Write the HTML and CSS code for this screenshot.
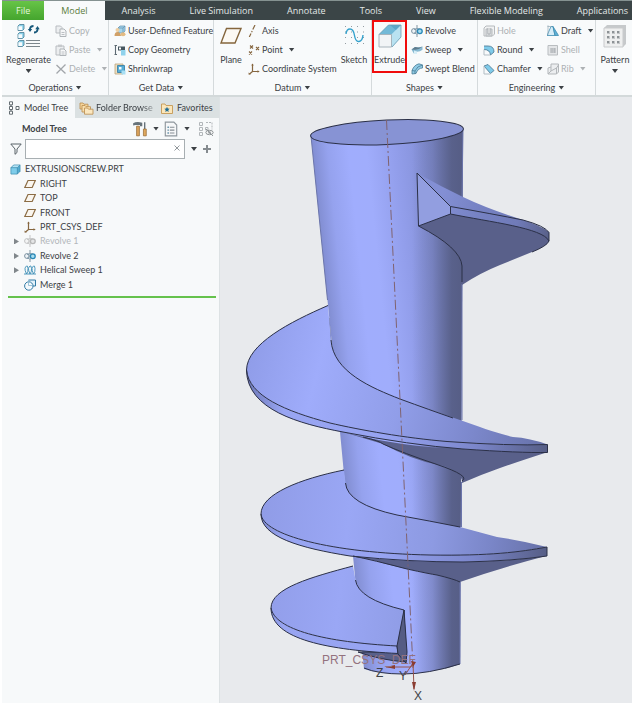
FILE: index.html
```html
<!DOCTYPE html>
<html lang="en">
<head>
<meta charset="utf-8">
<title>EXTRUSIONSCREW.PRT</title>
<link rel="stylesheet" href="styles.css">
</head>
<body>
<svg class="symbols" aria-hidden="true">
  <symbol id="cube" viewBox="0 0 12 12"><path d="M1 4l3-3h7v7l-3 3H1z" fill="#55acd0"/><path d="M1 4l3-3h7L8 4z" fill="#b5e3f4"/><path d="M1 4h7v7H1z" fill="#7fcdea"/><path d="M1 4l3-3h7v7l-3 3H1zM1 4h7v7M8 4l3-3" fill="none" stroke="#3687aa" stroke-width=".7"/></symbol>
  <symbol id="plane" viewBox="0 0 12 12"><path d="M4 2.500h7.300L8.200 9.500H.8z" fill="#faf6ef" stroke="#8c6d45" stroke-width="1.200"/></symbol>
  <symbol id="csys" viewBox="0 0 12 12"><path d="M4.500 1v7.500H11M4.500 8.500L1.500 11" fill="none" stroke="#86663f" stroke-width="1.200"/><path d="M3.300 2.500l1.200-2 1.200 2zM9.500 7.300l2.200 1.200-2.200 1.200zM.5 9.500l.2 2.200 2.200-.4z" fill="#86663f"/></symbol>
  <symbol id="revolve" viewBox="0 0 12 12"><path d="M6 0v3M6 4v4M6 9v3" stroke="#8296a3" fill="none"/><ellipse cx="2.800" cy="6" rx="2.200" ry="2.400" fill="#eef3f7" stroke="#7c919f"/><circle cx="8.800" cy="6.200" r="2.400" fill="#a9ddf0" stroke="#2688b8" stroke-width="1.300"/><path d="M3 4.500q3-2 6-.4M3 8q3 1.500 5 .5" fill="none" stroke="#68899d" stroke-width=".8"/></symbol>
  <symbol id="copy" viewBox="0 0 12 12"><path d="M1 1h4.500L7 2.500V8H1z" fill="#eceef0" stroke="#b8bcc0"/><path d="M5 4h4l2 2v5.500H5z" fill="#f5f6f7" stroke="#afb4b8"/><path d="M6.500 7.500h3M6.500 9.500h3" stroke="#bcc0c4"/></symbol>
  <symbol id="paste" viewBox="0 0 12 12"><path d="M1 2h8v9H1z" fill="#eceef0" stroke="#b8bcc0"/><path d="M3 .6h4v2.400H3z" fill="#c6c9cc"/><path d="M5 5h4l2 2v4.500H5z" fill="#f7f8f9" stroke="#afb4b8"/><path d="M6.500 8h3M6.500 10h3" stroke="#bcc0c4"/></symbol>
  <symbol id="delete" viewBox="0 0 12 12"><path d="M1.500 2l9 8.500M10.500 1.500l-9 9" stroke="#a2a6aa" stroke-width="1.300" fill="none"/></symbol>
  <symbol id="udf" viewBox="0 0 12 12"><path d="M4 3l2-2h5v5L9 8H4z" fill="#a5d6ee" stroke="#5f8dab" stroke-width=".7"/><path d="M4 3h5v5M9 3l2-2" fill="none" stroke="#5f8dab" stroke-width=".7"/><circle cx="3.500" cy="5" r="2" fill="#edcfa3"/><path d="M.5 11q0-4 3-4t3.500 4z" fill="#d0a067"/><ellipse cx="9" cy="9.300" rx="2.500" ry="2" fill="#e3bb83"/></symbol>
  <symbol id="copygeo" viewBox="0 0 12 12"><path d="M1.500 1v10M.5 1.500h2.500M.5 10.500h2.500" stroke="#5d6a73" stroke-width="1.100" fill="none"/><path d="M4 2.500h7v4H4z" fill="#46565f"/><path d="M5 3.500h2v2H5z" fill="#fff"/><path d="M7 6h4.500v5.500H7z" fill="#8fd2ec"/></symbol>
  <symbol id="shrink" viewBox="0 0 12 12"><path d="M1 1h8v10H1z" fill="#f0dfc0" stroke="#b9a57f" stroke-width=".8"/><path d="M3.500 2.500h7v7h-7z" fill="#56add6" stroke="#2f7aa3" stroke-width=".8"/><path d="M5 4h2.500v2.500H5z" fill="#f3fafd"/><path d="M7.500 7.500h4v4h-4z" fill="#a8dff3"/></symbol>
  <symbol id="axis" viewBox="0 0 12 12"><path d="M7 0L4.800 4.500M4.200 6L3.600 7.200M3 8.500L1.300 12" stroke="#86663f" stroke-width="1.200" fill="none"/></symbol>
  <symbol id="point" viewBox="0 0 12 12"><path d="M2 1.500l3 3M5 1.500l-3 3M8 3l3 3M11 3L8 6M1 7.500l3 3M4 7.500l-3 3" stroke="#86663f" stroke-width="1.100" fill="none"/></symbol>
  <symbol id="sweep" viewBox="0 0 12 12"><path d="M.5 5.500L4 3q4 1 7.500-.5v3.300Q9 8 5.500 7.800V9.500H2.800z" fill="#87b9d2"/><path d="M.5 5.500L4 3q4 1 7.500-.5Q8 6 3.500 5.700z" fill="#5e7b8c"/><path d="M3 6.500l3 1v2.500H3z" fill="#d8eef7"/></symbol>
  <symbol id="swept" viewBox="0 0 12 12"><path d="M1 11V7.500Q3 2 8 .8L11.500 2v3Q7 5 5 10.500z" fill="#91cce5" stroke="#477b96" stroke-width=".8"/><path d="M1 7.500l3 .5q2-5 7.500-6M4 8v3" fill="none" stroke="#477b96" stroke-width=".8"/></symbol>
  <symbol id="hole" viewBox="0 0 12 12"><path d="M1 3l2-2h8.500v8l-2 2H1z" fill="#f1f2f3" stroke="#b6babd"/><path d="M3 4h6v7H3z" fill="#d6d9dc" stroke="#b6babd"/><path d="M5 3v6h2V3" fill="#fff" stroke="#a8adb1"/></symbol>
  <symbol id="round" viewBox="0 0 12 12"><path d="M1 2h4q6 0 6 6L7.500 11Q7 6 1 5.500z" fill="#7fcbea"/><path d="M1 2h4q6 0 6 6M1 5.500Q7 5.500 7.500 11L11 8" fill="none" stroke="#527f99" stroke-width=".9"/><path d="M1 5.500v5.500h6" fill="none" stroke="#b2bdc4"/></symbol>
  <symbol id="chamfer" viewBox="0 0 12 12"><path d="M1 3l4-1.500L11 7.500 7.500 10.500z" fill="#7fcbea" stroke="#527f99" stroke-width=".9"/><path d="M1 3v8h6.500" fill="none" stroke="#b2bdc4"/></symbol>
  <symbol id="draft" viewBox="0 0 12 12"><path d="M0 10.500h8L6 1.500H4z" fill="#d6edf8" stroke="#3e8db2" stroke-width=".8"/><path d="M6 1.500l5.500 9H8z" fill="#5fb1d6" stroke="#3e8db2" stroke-width=".8"/><path d="M.5 1.500h4M1 .3v10" stroke="#92a7b4" fill="none" stroke-width=".7"/></symbol>
  <symbol id="shell" viewBox="0 0 12 12"><path d="M1 1.500h9.500v9.500H1z" fill="#e4e6e8" stroke="#b9bdc0"/><path d="M3.500 4h5v5h-5z" fill="#a9adb1"/><path d="M5 4v5M6.800 4v5" stroke="#cfd2d5"/></symbol>
  <symbol id="rib" viewBox="0 0 12 12"><path d="M1 5l3-1V1h7.500v8l-2 2H1z" fill="#eceef0" stroke="#b3b7ba"/><path d="M4 4v4l5.500-3v6M1 11l3-3M9.500 5l2-3" fill="none" stroke="#b3b7ba"/></symbol>
  <symbol id="helix" viewBox="0 0 12 12"><path d="M0 10h2.500Q4.300 8 4 4.500T2.500 2 1 4.500 2.500 10H6Q7.800 8 7.500 4.500T6 2 4.500 4.500 6 10h3.500Q11.300 8 11 4.500T9.500 2 8 4.500 9.500 10H12" fill="none" stroke="#3a8db6" stroke-width=".9"/></symbol>
  <symbol id="merge" viewBox="0 0 12 12"><path d="M4.500 1h7v6H8.500" fill="#e3f2fa" stroke="#327ba5"/><circle cx="4.800" cy="7" r="4.200" fill="#f4f9fc" stroke="#327ba5"/><path d="M4.500 1v5.500H8.500" fill="none" stroke="#88b7cf" stroke-width=".8"/></symbol>
  <symbol id="nodes" viewBox="0 0 12 14"><path d="M1.500.8h3v3h-3zM1.500 5.500h3v3h-3zM1.500 10.200h3v3h-3zM8 5.500h3v3H8z" fill="#fff" stroke="#555e63" stroke-width=".9"/><path d="M3 4v1.500M3 8.500v1.700" stroke="#555e63"/></symbol>
  <symbol id="folders" viewBox="0 0 14 14"><path d="M.5 2h3l1 1.200h4V8h-8z" fill="#f5d59b" stroke="#b98b4c" stroke-width=".8"/><path d="M2.500 4.500h3l1 1.200h4.500V11H2.500z" fill="#f9dfad" stroke="#b98b4c" stroke-width=".8"/><path d="M5 7h3l1 1.200h4.500v5H5z" fill="#fbe7bf" stroke="#b98b4c" stroke-width=".8"/></symbol>
  <symbol id="favfolder" viewBox="0 0 12 12"><path d="M.5 2H4l1 1.500h6.500v8H.5z" fill="#fbe6ba" stroke="#c8a061"/><path d="M6 4.800l.8 1.700 1.900.2L7.300 8l.4 1.900L6 9l-1.700.9.4-1.900-1.400-1.300 1.900-.2z" fill="#1e6c94"/></symbol>
  <symbol id="tools" viewBox="0 0 14 14"><path d="M1 2q3-2 8-.5v3H7v-1H3L1 4z" fill="#67737a"/><path d="M4 4.500h2.500V13H4z" fill="#dba35b" stroke="#93672f" stroke-width=".6"/><path d="M10.500 1h1.200v6h-1.200z" fill="#66727a"/><path d="M10 7h2.500v6H10z" fill="#e0a95e" stroke="#93672f" stroke-width=".6"/></symbol>
  <symbol id="doclist" viewBox="0 0 14 14"><path d="M2 1h7.500L12 3.500V13H2z" fill="#f6f7f8" stroke="#8f979d"/><path d="M4 5.500h1M4 8h1M4 10.500h1" stroke="#36718e" stroke-width="1.200"/><path d="M6 5.500h4M6 8h4M6 10.500h4" stroke="#858d93"/></symbol>
  <symbol id="hidden" viewBox="0 0 16 16"><path d="M1.500 1.500h3v3h-3zM1.500 6.500h3v3h-3zM1.500 11.500h3v3h-3zM7.500 6.500h2.500v2.500H7.500z" fill="none" stroke="#b2b7ba"/><path d="M8 1.500h6v7" fill="none" stroke="#b2b7ba" stroke-dasharray="2 1"/><ellipse cx="11.500" cy="11.500" rx="3.700" ry="2.200" fill="#f4f5f5" stroke="#92979a"/><circle cx="11.500" cy="11.500" r="1.200" fill="#92979a"/><path d="M8 8l7 7" stroke="#92979a"/></symbol>
  <symbol id="funnel" viewBox="0 0 12 12"><path d="M.8 1h10.400L7 6v3.500L5 11.300V6z" fill="#f8fafa" stroke="#596268"/></symbol>
  <symbol id="regen" viewBox="0 0 24 26"><g fill="#8bd1ea" stroke="#467b92" stroke-width=".8"><path d="M1 3l1.500-1.500H7V6L5.500 7.500H1zM1 11l1.500-1.500H7V14l-1.500 1.500H1zM1 19l1.500-1.500H7V22l-1.500 1.500H1z"/></g><path d="M1.400 3.300h3.800v3.800H1.400zM1.400 11.300h3.800v3.800H1.400zM1.400 19.300h3.800v3.800H1.400z" fill="#f7fbfd"/><path d="M13 7V5.500q.7-2.500 3.500-2.500M20.500 5v2q-.7 2.500-3.500 2.500" fill="none" stroke="#17587a" stroke-width="1.800"/><path d="M10.800 6h4.400L13 9zM18.300 6.200h4.400L20.500 3z" fill="#17587a"/><path d="M9 17.500h14M9 20.500h14M9 23.500h14" stroke="#7c878d"/></symbol>
  <symbol id="plane-big" viewBox="0 0 24 24"><path d="M7.500 4.500h14.500L16 19H2z" fill="#fcf9f3" stroke="#84653c" stroke-width="1.400"/></symbol>
  <symbol id="sketch" viewBox="0 0 24 24"><path d="M3 2.500h20M3 8h20M3 13.500h20M3 19.500h20" stroke="#949ca2" stroke-dasharray="1 5"/><path d="M4 10Q4.500 5 8 5T12.500 11.500 17 17.500t4-6.500" fill="none" stroke="#35a2cd" stroke-width="1.400"/></symbol>
  <symbol id="extrude" viewBox="0 0 24 24"><path d="M1 10.500L10.500 1H23v12L14 23H1z" fill="#9bd2e8"/><path d="M10.500 1H23L13.500 10.500H1z" fill="#72b9d7"/><path d="M12 1h11v11l-4-5z" fill="#5ba7c9"/><path d="M13.500 10.500L23 1v12L14 23z" fill="#b9e2f1"/><path d="M1 10.500h12.500V23H1z" fill="#f1f4f6" stroke="#a7b4bc"/><path d="M1 10.500L10.500 1H23v12L14 23" fill="none" stroke="#6c9db4" stroke-width=".8"/></symbol>
  <symbol id="pattern" viewBox="0 0 24 24"><path d="M1 4l3-3h19v19l-3 3H1z" fill="#c6c9cb"/><path d="M1 4h19v19H1z" fill="#eeefef" stroke="#c9cbcd"/><path d="M4 7h3v3H4zM9 7h3v3H9zM14 7h3v3h-3zM4 12h3v3H4zM9 12h3v3H9zM14 12h3v3h-3zM4 17h3v3H4zM9 17h3v3H9zM14 17h3v3h-3z" fill="#c3c6c8"/><path d="M4 7h2v2H4zM9 7h2v2H9zM14 7h2v2h-2zM4 12h2v2H4zM9 12h2v2H9zM14 12h2v2h-2zM4 17h2v2H4zM9 17h2v2H9zM14 17h2v2h-2z" fill="#8d9295"/></symbol>
</svg>

<div class="app">
  <nav class="tabs">
    <a class="tab file" href="#file">File</a>
    <a class="tab active" href="#model">Model</a>
    <a class="tab" href="#analysis">Analysis</a>
    <a class="tab" href="#live">Live Simulation</a>
    <a class="tab" href="#annotate">Annotate</a>
    <a class="tab" href="#tools-tab">Tools</a>
    <a class="tab" href="#view">View</a>
    <a class="tab" href="#flexible">Flexible Modeling</a>
    <a class="tab" href="#applications">Applications</a>
  </nav>

  <div class="ribbon">
    <section class="group operations">
      <div class="commands">
        <button class="big"><svg><use href="#regen"/></svg><span>Regenerate</span><i class="caret"></i></button>
        <div class="stack">
          <button class="cmd" disabled><svg><use href="#copy"/></svg>Copy</button>
          <button class="cmd" disabled><svg><use href="#paste"/></svg>Paste<i class="caret"></i></button>
          <button class="cmd" disabled><svg><use href="#delete"/></svg>Delete<i class="caret"></i></button>
        </div>
      </div>
      <button class="group-name">Operations<i class="caret"></i></button>
    </section>
    <section class="group getdata">
      <div class="commands">
        <div class="stack">
          <button class="cmd"><svg><use href="#udf"/></svg>User-Defined Feature</button>
          <button class="cmd"><svg><use href="#copygeo"/></svg>Copy Geometry</button>
          <button class="cmd"><svg><use href="#shrink"/></svg>Shrinkwrap</button>
        </div>
      </div>
      <button class="group-name">Get Data<i class="caret"></i></button>
    </section>
    <section class="group datum">
      <div class="commands">
        <button class="big"><svg><use href="#plane-big"/></svg><span>Plane</span></button>
        <div class="stack">
          <button class="cmd"><svg><use href="#axis"/></svg>Axis</button>
          <button class="cmd"><svg><use href="#point"/></svg>Point<i class="caret"></i></button>
          <button class="cmd"><svg><use href="#csys"/></svg>Coordinate System</button>
        </div>
        <button class="big"><svg><use href="#sketch"/></svg><span>Sketch</span></button>
      </div>
      <button class="group-name">Datum<i class="caret"></i></button>
    </section>
    <section class="group shapes">
      <div class="commands">
        <button class="big marked"><svg><use href="#extrude"/></svg><span>Extrude</span></button>
        <div class="stack">
          <button class="cmd"><svg><use href="#revolve"/></svg>Revolve</button>
          <button class="cmd"><svg><use href="#sweep"/></svg>Sweep<i class="caret"></i></button>
          <button class="cmd"><svg><use href="#swept"/></svg>Swept Blend</button>
        </div>
      </div>
      <button class="group-name">Shapes<i class="caret"></i></button>
    </section>
    <section class="group engineering">
      <div class="commands">
        <div class="stack">
          <button class="cmd" disabled><svg><use href="#hole"/></svg>Hole</button>
          <button class="cmd"><svg><use href="#round"/></svg>Round<i class="caret"></i></button>
          <button class="cmd"><svg><use href="#chamfer"/></svg>Chamfer<i class="caret"></i></button>
        </div>
        <div class="stack">
          <button class="cmd"><svg><use href="#draft"/></svg>Draft<i class="caret"></i></button>
          <button class="cmd" disabled><svg><use href="#shell"/></svg>Shell</button>
          <button class="cmd" disabled><svg><use href="#rib"/></svg>Rib<i class="caret"></i></button>
        </div>
      </div>
      <button class="group-name">Engineering<i class="caret"></i></button>
    </section>
    <section class="group editing">
      <div class="commands">
        <button class="big"><svg><use href="#pattern"/></svg><span>Pattern</span><i class="caret"></i></button>
      </div>
    </section>
  </div>

  <div class="work">
    <aside class="side">
      <nav class="side-tabs">
        <a class="side-tab active" href="#tree"><svg><use href="#nodes"/></svg><span>Model Tree</span></a>
        <a class="side-tab folder" href="#folder"><svg><use href="#folders"/></svg><span>Folder Browse</span></a>
        <a class="side-tab" href="#favorites"><svg><use href="#favfolder"/></svg><span>Favorites</span></a>
      </nav>
      <header class="side-head">
        <h2>Model Tree</h2>
        <button class="tool" aria-label="Settings"><svg><use href="#tools"/></svg><i class="caret"></i></button>
        <button class="tool" aria-label="Show"><svg><use href="#doclist"/></svg><i class="caret"></i></button>
        <button class="tool" aria-label="Hidden items"><svg><use href="#hidden"/></svg></button>
      </header>
      <div class="filter">
        <label for="filter" aria-label="Filter"><svg><use href="#funnel"/></svg></label>
        <div class="field">
          <input id="filter" type="text">
          <button aria-label="Clear"><svg viewBox="0 0 8 8"><path d="M1.500 1.500l5 5M6.500 1.500l-5 5" stroke="#92989c" fill="none"/></svg></button>
        </div>
        <button aria-label="Filter options"><i class="caret"></i></button>
        <button aria-label="Add filter"><svg viewBox="0 0 8 8"><path d="M4 0v8M0 4h8" stroke="#858b8f" stroke-width="2" fill="none"/></svg></button>
      </div>
      <ul class="tree" id="tree">
        <li class="root"><svg><use href="#cube"/></svg>EXTRUSIONSCREW.PRT</li>
        <li><i class="twist"></i><svg><use href="#plane"/></svg>RIGHT</li>
        <li><i class="twist"></i><svg><use href="#plane"/></svg>TOP</li>
        <li><i class="twist"></i><svg><use href="#plane"/></svg>FRONT</li>
        <li><i class="twist"></i><svg><use href="#csys"/></svg>PRT_CSYS_DEF</li>
        <li class="dim"><i class="twist closed"></i><svg><use href="#revolve"/></svg>Revolve 1</li>
        <li><i class="twist closed"></i><svg><use href="#revolve"/></svg>Revolve 2</li>
        <li><i class="twist closed"></i><svg><use href="#helix"/></svg>Helical Sweep 1</li>
        <li><i class="twist"></i><svg><use href="#merge"/></svg>Merge 1</li>
      </ul>
      <hr class="insert-here">
    </aside>

    <main class="viewport">
      <svg class="model" viewBox="220 97 412 606" role="img" aria-label="Extrusion screw">
        <defs>
          <linearGradient id="body" gradientUnits="userSpaceOnUse" x1="311" y1="136" x2="460" y2="121">
            <stop offset="0" stop-color="#828ed2"/><stop offset=".1" stop-color="#95a2ee"/><stop offset=".24" stop-color="#a0adfd"/><stop offset=".36" stop-color="#a0adfc"/><stop offset=".55" stop-color="#929eeb"/><stop offset=".75" stop-color="#8490d7"/><stop offset="1" stop-color="#7480c0"/>
          </linearGradient>
          <linearGradient id="shade" gradientUnits="userSpaceOnUse" x1="412" y1="0" x2="463" y2="0">
            <stop offset="0" stop-color="#5a628c" stop-opacity="0"/><stop offset=".4" stop-color="#5a628c" stop-opacity=".35"/><stop offset=".78" stop-color="#59618b"/><stop offset="1" stop-color="#565d85"/>
          </linearGradient>
          <linearGradient id="top1" gradientUnits="userSpaceOnUse" x1="440" y1="200" x2="548" y2="238">
            <stop offset="0" stop-color="#838fd4"/><stop offset=".35" stop-color="#7682c3"/><stop offset=".7" stop-color="#707bb8"/><stop offset="1" stop-color="#596189"/>
          </linearGradient>
          <linearGradient id="top2" gradientUnits="userSpaceOnUse" x1="247" y1="370" x2="548" y2="448">
            <stop offset="0" stop-color="#909de9"/><stop offset=".22" stop-color="#9facfb"/><stop offset=".5" stop-color="#919ee9"/><stop offset=".75" stop-color="#7c88cc"/><stop offset="1" stop-color="#6671a8"/>
          </linearGradient>
          <linearGradient id="top3" gradientUnits="userSpaceOnUse" x1="262" y1="515" x2="548" y2="548">
            <stop offset="0" stop-color="#909ce7"/><stop offset=".3" stop-color="#9aa7f5"/><stop offset=".6" stop-color="#8d9ae2"/><stop offset=".8" stop-color="#7a86c8"/><stop offset="1" stop-color="#6670a6"/>
          </linearGradient>
          <linearGradient id="rim" gradientUnits="userSpaceOnUse" x1="247" y1="0" x2="549" y2="0">
            <stop offset="0" stop-color="#6e79b9"/><stop offset=".12" stop-color="#98a5f2"/><stop offset=".45" stop-color="#97a4f2"/><stop offset=".75" stop-color="#7c87cc"/><stop offset="1" stop-color="#555d84"/>
          </linearGradient>
        </defs>
        <g class="edge">
          <path class="plain" fill="url(#body)" d="M311 136L332 345 340 432 345 485 353 556 356 587 364 669Q378 674 403 674T460 664L463 129Q387 115 311 136z"/>
          <path class="plain" fill="url(#shade)" d="M410 128L463 129 460 664Q440 672 410 673z"/>
          <path d="M311 136L327.500 300M331 342L329 318M463 129L462 197M462 284V420M461.500 482V527M460 582V664" class="soft"/>
          <path d="M364 668Q378 674 403 674T460 664"/>
          <ellipse cx="387" cy="132.300" rx="76.500" ry="12.200" transform="rotate(-2.600 387 132.300)" fill="#8793d4"/>

          <path class="plain" fill="url(#top1)" d="M417 173Q440 186 463 197T517 218Q540 225 549 232V242Q540 238 450 214V206z"/>
          <path class="plain" fill="#59608a" d="M450.500 214C490 222 543 228 549 241Q547 246 532 252L500 265Q480 273 462 285V268Q460 247 418.500 226z"/>
          <path fill="#929ee0" d="M417 173L450.500 206.500V214L418.500 226z"/>
          <path d="M450.500 206.500Q493 214 523 220 545 226 549 232.500V241M450.500 214C490 222 543 228 549 241Q547 246 532 252M418.500 226Q461 248 462 266V282"/>

          <path class="plain" fill="#59608a" d="M343 432Q400 447 463 449L548 452Q520 461 500 468T462 483Q462 469 437 464.500T383 444z"/>
          <path class="plain" fill="url(#top2)" d="M328 305.500C290 322 247 344 246.500 370 249 396 285 411 330 423 360 430 405 438 447 441.500Q510 446 547.500 444.500 530 438 513 437 490 431 480 427L460 420Q430 410 400 399C372 388 335 372 331 342z"/>
          <path fill="url(#rim)" d="M246.500 370C249 396 285 411 330 423 360 430 405 438 447 441.500Q510 446 547.500 444.500V452.500Q520 453 463 449 410 445 343 432C300 424 247 410 246.500 370z"/>
          <path d="M328 305.500C290 322 247 344 246.500 370M331 340C333 372 372 388 400 399Q430 410 453 418M363 437Q380 441 383 444 403 453 437 464.500T462 481"/>

          <path class="plain" fill="#59608a" d="M350 556Q400 562 463 562 513 561 546 556 500 568 460 582 453 578 437 575 390 566 373 560z"/>
          <path class="plain" fill="url(#top3)" d="M344 470C300 479 261 494 261 514 263 535 330 553 430 555 490 556 520 552 547 547Q520 540 497 537L460 527Q430 521 397 515 347 504 345.500 483z"/>
          <path fill="url(#rim)" d="M261 514C263 535 330 553 430 555 490 556 520 552 547 547V556Q513 561 463 562 410 562 350 556C300 548 261 537 261 514z"/>
          <path d="M344 470C300 479 261 494 261 514M345.500 483Q347 504 397 515 430 521 460 527M353 556Q373 560 407 569 430 574 437 575 454 579 460 582"/>

          <path fill="#59608a" d="M358 652L397 652 404 610 406 662Q380 660 358 652z"/>
          <path class="plain" fill="url(#top3)" d="M353 566C312 577 271 588 271 608 275 630 325 642 397 646L404 610Q360 600 355.500 580z"/>
          <path fill="url(#rim)" d="M271 608C275 630 325 642 397 646L398 653.500C330 650 271 640 271 608z"/>
          <path fill="#555c83" d="M404 610L397 646 398 654 406 663 407 652z"/>
          <path d="M353 566C312 577 271 588 271 608M355.500 580Q358 599 404 610"/>
        </g>
        <path class="centerline" d="M386.500 120L413 668"/>
        <g class="csys">
          <path d="M413 663L414 689M413 663L411 667H386M413 663L405 675"/>
          <path class="head" d="M412 682h4l-2 9zM395 665v4l-9-2zM411 661l5 1-3 5z"/>
          <text x="322" y="664" class="csys-name">PRT_CSYS_DEF</text>
          <text x="376" y="677">Z</text>
          <text x="399" y="680">Y</text>
          <text x="414" y="700">X</text>
        </g>
      </svg>
    </main>
  </div>
</div>
</body>
</html>
```

FILE: styles.css
```css
* { box-sizing: border-box; }

body {
  margin: 0;
  background: #fff;
  color: #3c4145;
  font: 9px/12px Lato, "Open Sans", sans-serif;
}

button {
  padding: 0;
  border: 0;
  background: none;
  color: inherit;
  font: inherit;
  white-space: nowrap;
}

a { color: inherit; text-decoration: none; }

.symbols { display: none; }

.app {
  display: flex;
  flex-direction: column;
  min-height: 100vh;
  padding-left: 2px;
  overflow: hidden;
}

.caret {
  flex: none;
  width: 6px;
  height: 4px;
  background: currentColor;
  clip-path: polygon(0 0, 100% 0, 50% 100%);
}

/* Ribbon tabs */
.tabs {
  display: flex;
  height: 20px;
  border-top: 1px solid #859291;
  background: #3b4547;
  color: #e4e8e8;
  font-family: "Open Sans", "Noto Sans", sans-serif;
}

.tab {
  flex: none;
  padding: 4px 17px 0;
  white-space: nowrap;
}

.file {
  padding: 4px 14px 0;
  background: linear-gradient(#67c447, #45a52e);
  color: #e4f6de;
}

.tab.active { background: #f8fafb; color: #5b7c3d; }

/* Ribbon groups */
.ribbon {
  display: grid;
  grid-template-columns: 107px 105px 158px 106px 118px 1fr;
  height: 77px;
  border-bottom: 2px solid #d3d9da;
  background: #f8fafb;
}

.group {
  display: flex;
  flex-direction: column;
  min-width: 0;
  border-right: 1px solid #d5dadc;
}

.editing { border-right: 0; }

.commands {
  display: flex;
  height: 60px;
}

.stack {
  display: grid;
  grid-template-rows: repeat(3, 19px);
  align-content: start;
  padding-top: 1px;
}

.cmd {
  display: flex;
  align-items: center;
  gap: 2px;
  text-align: left;
}

.cmd svg { flex: none; width: 12px; height: 12px; }
.cmd .caret { margin-left: 4px; }
.cmd:disabled { color: #adb1b4; }

.big {
  display: flex;
  flex: none;
  flex-direction: column;
  align-items: center;
  gap: 5px;
  padding-top: 3px;
}

.big svg { width: 24px; height: 26px; }
.big .caret { margin-top: -2px; }

.group-name {
  display: flex;
  align-items: center;
  justify-content: center;
  gap: 3px;
  height: 15px;
}

.operations .big { width: 53px; }
.getdata .commands { padding-left: 5px; }
.datum .big { width: 34px; }
.datum .stack { flex: 1; }
.shapes .big { width: 35px; }
.shapes .stack { margin-left: 4px; }
.big.marked { height: 53px; border: 2px solid #f00c0c; padding-top: 1px; }
.engineering .commands { padding-left: 5px; }
.engineering .stack:first-child { width: 64px; }
.editing .big { width: 38px; }

/* Side panel */
.work { display: flex; flex: 1; }

.side {
  flex: none;
  width: 218px;
  border-right: 1px solid #dde2e4;
  background: #f7f9fa;
}

.side-tabs {
  display: flex;
  height: 21px;
  background: #dbe1e2;
}

.side-tab {
  display: flex;
  align-items: center;
  gap: 4px;
  flex: none;
  width: 73px;
  padding-left: 6px;
  white-space: nowrap;
}

.side-tab.active { background: #f7f9fa; }
.side-tab svg { flex: none; width: 12px; height: 14px; }
.side-tab.folder { width: 80px; padding: 0 0 0 4px; gap: 2px; }
.side-tab.folder svg { width: 15px; }
.side-tab.folder span { mask-image: linear-gradient(90deg, #000 80%, #0006); }

.side-head {
  display: flex;
  align-items: center;
  gap: 4px;
  height: 21px;
  padding: 0 5px 0 20px;
}

.side-head h2 { flex: 1; margin: 0; font: inherit; font-weight: 700; }
.tool { display: flex; align-items: center; gap: 5px; }
.tool svg { width: 16px; height: 16px; }

.side-head .tool:last-child { margin-left: 4px; }

.filter {
  display: flex;
  align-items: center;
  gap: 6px;
  padding: 0 8px;
}

.filter label { display: flex; }
.filter label svg { width: 12px; height: 12px; }
.filter > button { display: flex; }
.filter svg { width: 8px; height: 8px; }

.field {
  display: flex;
  flex: 1;
  height: 20px;
  margin-left: -3px;
  border: 1px solid #a8afb2;
  background: #fff;
}

.field input {
  flex: 1;
  min-width: 0;
  border: 0;
  background: none;
  font: inherit;
  outline: 0;
}

.field button { width: 14px; }

.tree {
  display: grid;
  grid-auto-rows: 1fr;
  height: 130px;
  margin: 3px 0 0;
  padding: 0 8px;
  list-style: none;
}

.tree li { display: flex; align-items: center; gap: 4px; }
.tree svg { flex: none; width: 12px; height: 12px; }
.tree .root svg { width: 11px; height: 11px; }
.twist { width: 10px; height: 6px; }

.twist.closed {
  background: #81878b;
  clip-path: polygon(40% 0, 90% 50%, 40% 100%);
}

.dim { color: #b3b7ba; }
.dim svg { filter: grayscale(1); opacity: .5; }

.insert-here {
  height: 2px;
  margin: 4px 3px 0 6px;
  border: 0;
  background: #65c24c;
}

/* Graphics area */
.viewport { flex: 1; min-width: 0; background: #e8eaed; }
.model { display: block; width: 100%; height: auto; }

.edge path,
.edge ellipse {
  stroke: #2b3047;
  stroke-width: 1;
}

.edge path:not([fill]) { fill: none; }
.edge .plain { stroke: none; }
.edge .soft { stroke: #6b75ab; }

.centerline {
  fill: none;
  stroke: #80636f;
  stroke-dasharray: 10 3 2 3;
}

.csys path { fill: none; stroke: #96544d; }
.csys .head { fill: #8b3c32; stroke: none; }
.csys text { fill: #404247; font: 12px "Liberation Sans", sans-serif; }
.csys .csys-name { fill: #93727e; }
```
